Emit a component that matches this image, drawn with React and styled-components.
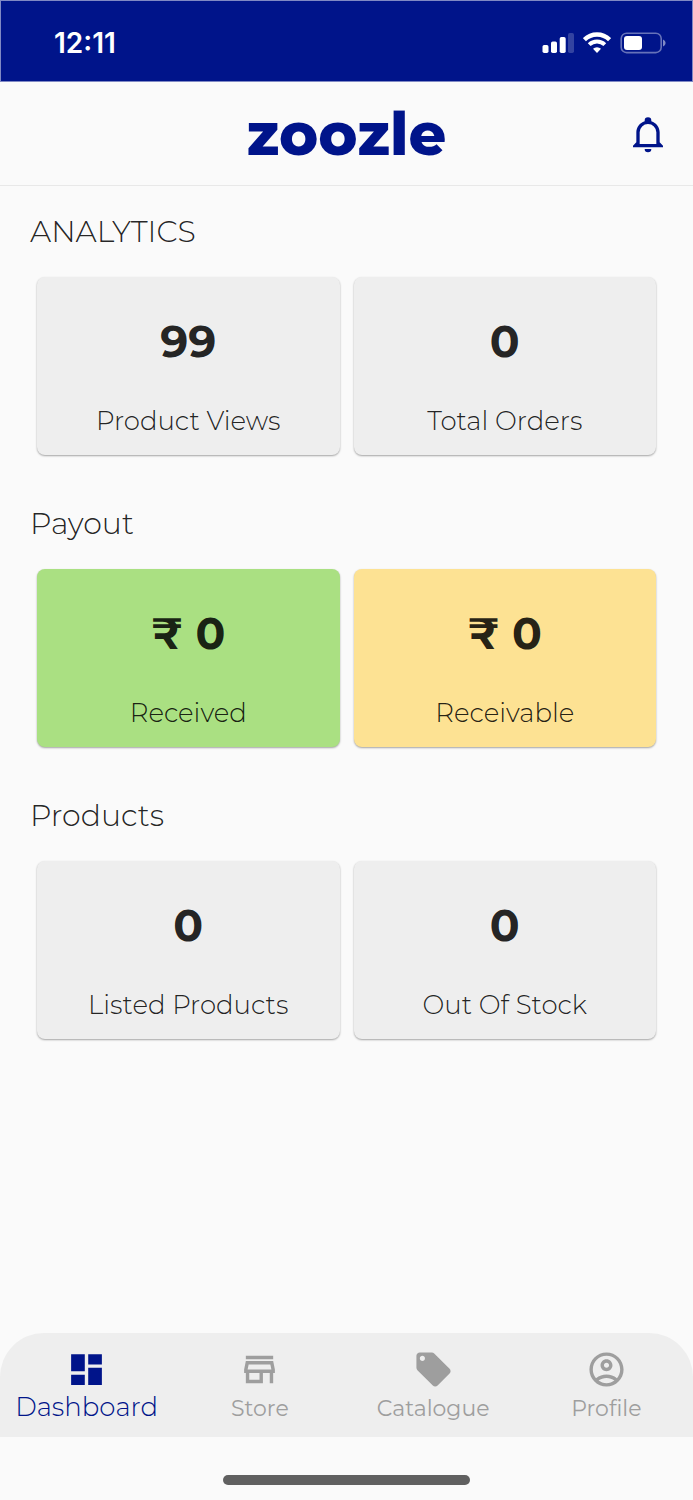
import styled, { createGlobalStyle } from 'styled-components';
import {
  MdDashboard,
  MdLocalOffer,
  MdOutlineAccountCircle,
  MdOutlineStore,
} from 'react-icons/md';

const sections = [
  {
    title: 'ANALYTICS',
    cards: [
      { value: '99', label: 'Product Views' },
      { value: '0', label: 'Total Orders' },
    ],
  },
  {
    title: 'Payout',
    cards: [
      { value: '₹ 0', label: 'Received', color: '#aae082' },
      { value: '₹ 0', label: 'Receivable', color: '#fde293' },
    ],
  },
  {
    title: 'Products',
    cards: [
      { value: '0', label: 'Listed Products' },
      { value: '0', label: 'Out Of Stock' },
    ],
  },
];

const tabs = [
  { label: 'Dashboard', icon: MdDashboard, active: true },
  { label: 'Store', icon: MdOutlineStore },
  { label: 'Catalogue', icon: MdLocalOffer },
  { label: 'Profile', icon: MdOutlineAccountCircle },
];

function StatusIcons() {
  return (
    <Indicators>
      <svg width="32" height="22" viewBox="0 0 32 22" fill="#fff">
        <rect x="0.5" y="13" width="6" height="8" rx="1.7" />
        <rect x="9" y="9.5" width="6" height="11.5" rx="1.7" />
        <rect x="17.7" y="5" width="6" height="16" rx="1.7" />
        <rect x="26" y="1" width="6" height="20" rx="1.7" opacity="0.2" />
      </svg>
      <svg width="28" height="22" viewBox="0 0 28 22" fill="none" stroke="#fff">
        <path d="M1.4 7.6a18 18 0 0 1 25.2 0" strokeWidth="4.4" />
        <path d="M6.2 12.6a11.2 11.2 0 0 1 15.6 0" strokeWidth="4" />
        <path d="M10 16.8a5.8 5.8 0 0 1 8 0L14 21z" fill="#fff" stroke="none" />
      </svg>
      <svg width="46" height="22" viewBox="0 0 46 22" fill="none">
        <rect x="1.2" y="1.2" width="40" height="19.4" rx="5.4" stroke="#fff" strokeOpacity="0.4" strokeWidth="1.6" />
        <rect x="4" y="4" width="18" height="14" rx="3" fill="#fff" />
        <path d="M43 7.4c3.4 1.4 3.4 5.6 0 7z" fill="#fff" fillOpacity="0.5" />
      </svg>
    </Indicators>
  );
}

function BellIcon() {
  return (
    <svg width="40" height="40" viewBox="0 0 24 24" fill="currentColor">
      <path d="M10 21H14A2 2 0 0 1 12 23A2 2 0 0 1 10 21M21 19V20H3V19L5 17V11C5 7.9 7.03 5.17 10 4.29C10 4.19 10 4.1 10 4A2 2 0 0 1 12 2A2 2 0 0 1 14 4C14 4.1 14 4.19 14 4.29C16.97 5.17 19 7.9 19 11V17L21 19M17 11A5 5 0 0 0 12 6A5 5 0 0 0 7 11V18H17V11Z" />
    </svg>
  );
}

export default function App() {
  return (
    <Page>
      <GlobalStyle />
      <StatusBar>
        <Time>12:11</Time>
        <StatusIcons />
      </StatusBar>
      <Header>
        <Logo>zoozle</Logo>
        <BellButton aria-label="Notifications">
          <BellIcon />
        </BellButton>
      </Header>
      <Main>
        {sections.map((section) => (
          <section key={section.title}>
            <Title>{section.title}</Title>
            <Cards>
              {section.cards.map((card) => (
                <Card key={card.label} $color={card.color}>
                  <Value>{card.value}</Value>
                  <Label>{card.label}</Label>
                </Card>
              ))}
            </Cards>
          </section>
        ))}
      </Main>
      <TabBar>
        {tabs.map(({ label, icon: Icon, active }) => (
          <Tab key={label} $active={active} aria-current={active ? 'page' : undefined}>
            <Icon size={41} />
            <span>{label}</span>
          </Tab>
        ))}
      </TabBar>
      <HomeArea>
        <HomeIndicator />
      </HomeArea>
    </Page>
  );
}

const GlobalStyle = createGlobalStyle`
  * {
    box-sizing: border-box;
  }
  body {
    margin: 0;
    background: #fafafa;
    color: rgba(0, 0, 0, 0.87);
    font-family: Montserrat, Inter, 'Open Sans', sans-serif;
  }
  h1, h2, p {
    margin: 0;
  }
  button {
    padding: 0;
    border: 0;
    background: none;
    font-family: inherit;
    cursor: pointer;
  }
`;
const Page = styled.div`
  display: flex;
  flex-direction: column;
  min-height: 100vh;
`;
const StatusBar = styled.div`
  display: flex;
  align-items: center;
  justify-content: space-between;
  height: 82px;
  padding: 4px 26px 0 53px;
  border: 1px solid #8089c4;
  background: #00148a;
  color: #fff;
`;
const Time = styled.span`
  font-family: Inter, sans-serif;
  font-size: 28px;
  font-weight: 600;
`;
const Indicators = styled.div`
  display: flex;
  align-items: center;
  gap: 9px;
`;
const Header = styled.header`
  display: grid;
  grid-template-columns: 1fr auto 1fr;
  align-items: center;
  height: 104px;
  padding: 0 25px;
  border-bottom: 1px solid #e8e8e8;
  color: #00148a;
`;
const Logo = styled.h1`
  grid-column: 2;
  font-size: 59px;
  font-weight: 800;
  line-height: 80px;
`;
const BellButton = styled.button`
  display: flex;
  justify-self: end;
  color: inherit;
`;
const Main = styled.main`
  display: flex;
  flex: 1;
  flex-direction: column;
  gap: 51px;
  padding: 28px 30px;
`;
const Title = styled.h2`
  font-size: 30px;
  font-weight: 300;
  line-height: 36px;
`;
const Cards = styled.div`
  display: grid;
  grid-template-columns: 1fr 1fr;
  gap: 14px;
  padding: 27px 7px 0;
`;
const Card = styled.div`
  display: flex;
  flex-direction: column;
  align-items: center;
  gap: 40px;
  padding: 40px 8px 18px;
  border-radius: 8px;
  background: ${(props) => props.$color || '#eeeeee'};
  box-shadow: 0 1px 2px rgba(0, 0, 0, 0.35);
`;
const Value = styled.p`
  font-size: 44px;
  font-weight: 700;
  line-height: 48px;
`;
const Label = styled.p`
  font-size: 26px;
  font-weight: 300;
  line-height: 32px;
`;
const TabBar = styled.nav`
  display: grid;
  grid-template-columns: repeat(4, 1fr);
  height: 104px;
  border-radius: 44px 44px 0 0;
  background: #eeeeee;
`;
const Tab = styled.button`
  display: flex;
  flex-direction: column;
  align-items: center;
  gap: 2px;
  padding-top: 16px;
  color: ${(props) => (props.$active ? '#00148a' : '#9e9e9e')};
  font-size: ${(props) => (props.$active ? 26 : 22)}px;
  font-weight: ${(props) => (props.$active ? 300 : 400)};
  line-height: ${(props) => (props.$active ? 30 : 34)}px;
`;
const HomeArea = styled.div`
  display: flex;
  justify-content: center;
  height: 63px;
  padding-top: 38px;
`;
const HomeIndicator = styled.div`
  width: 247px;
  height: 10px;
  border-radius: 5px;
  background: #606060;
`;
